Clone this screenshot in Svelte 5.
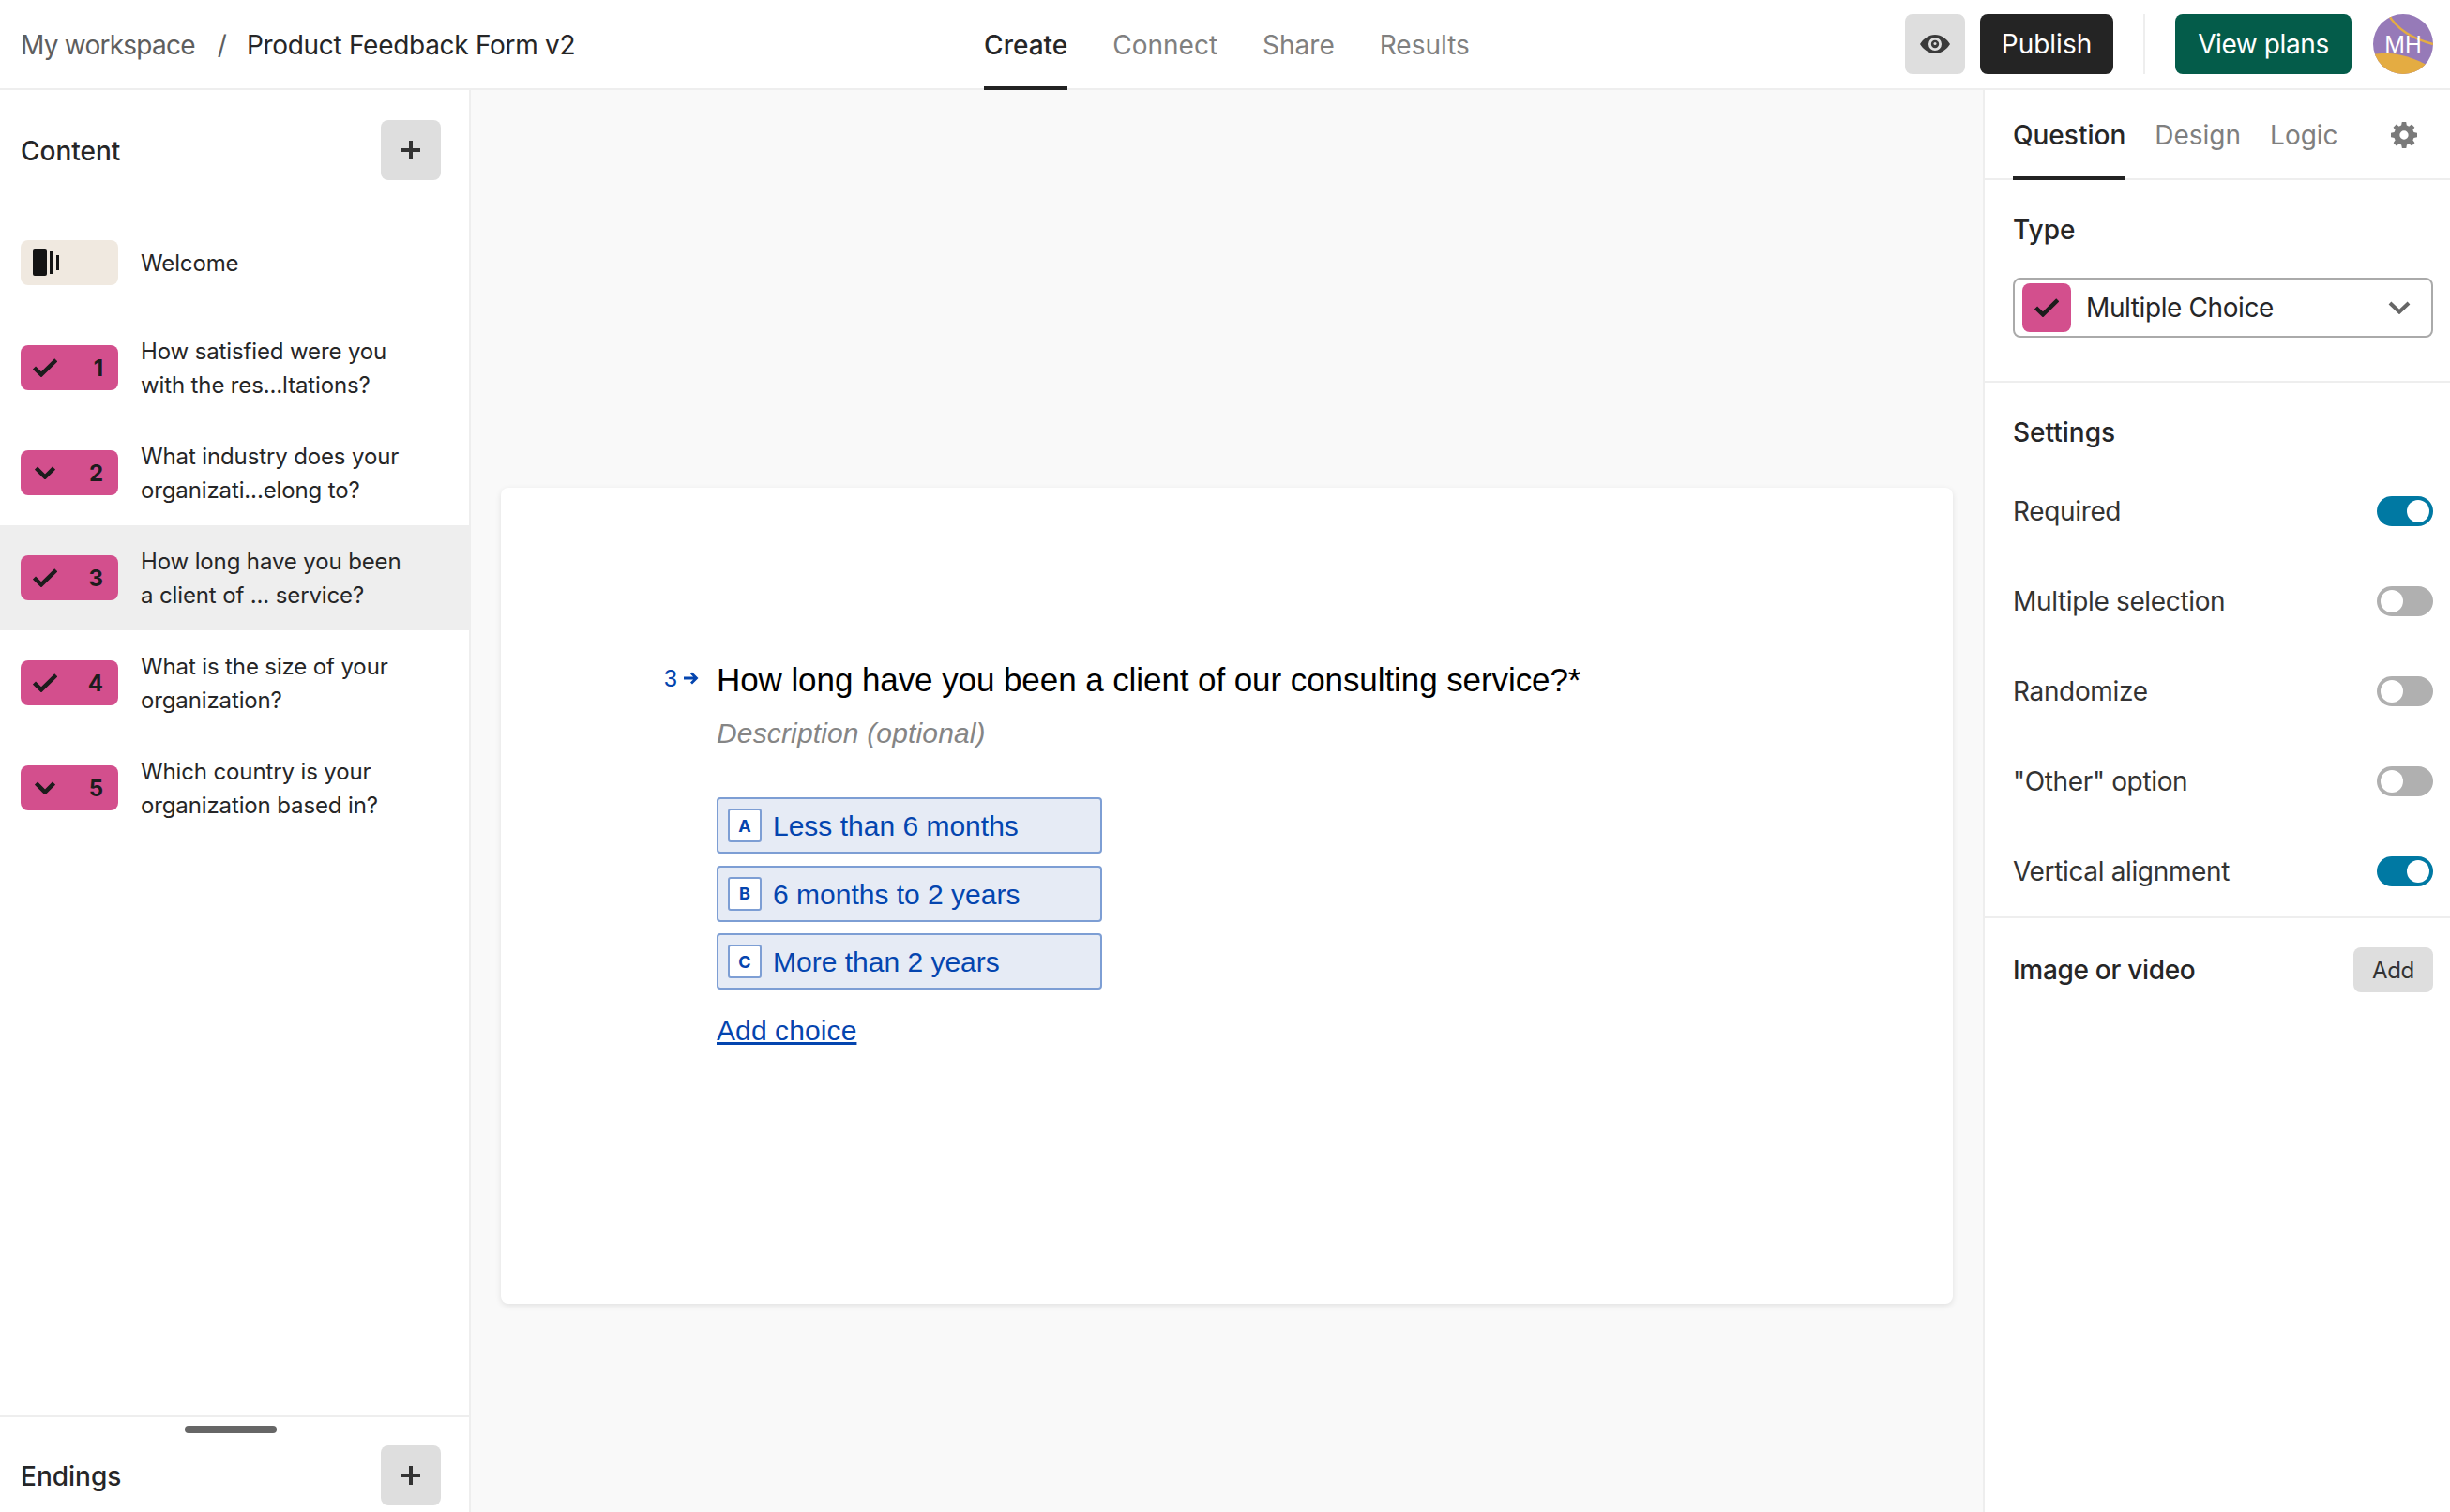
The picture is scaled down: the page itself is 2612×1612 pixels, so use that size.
<script>
  const questions = [
    { n: 1, icon: "check", lines: ["How satisfied were you", "with the res...ltations?"] },
    { n: 2, icon: "chevron", lines: ["What industry does your", "organizati...elong to?"] },
    { n: 3, icon: "check", lines: ["How long have you been", "a client of ... service?"], active: true },
    { n: 4, icon: "check", lines: ["What is the size of your", "organization?"] },
    { n: 5, icon: "chevron", lines: ["Which country is your", "organization based in?"] },
  ];
  const choices = [
    { key: "A", label: "Less than 6 months" },
    { key: "B", label: "6 months to 2 years" },
    { key: "C", label: "More than 2 years" },
  ];
  const settings = [
    { label: "Required", on: true },
    { label: "Multiple selection", on: false },
    { label: "Randomize", on: false },
    { label: '"Other" option', on: false },
    { label: "Vertical alignment", on: true },
  ];
</script>

{#snippet plus()}
  <button class="add-btn" aria-label="Add">
    <svg width="20" height="20" viewBox="0 0 20 20"><path d="M10 0v20M0 10h20" stroke="#333" stroke-width="4" fill="none" /></svg>
  </button>
{/snippet}

{#snippet check()}
  <svg width="26" height="20" viewBox="0 0 26 20"><path d="M1.500 10l7.500 7.300L24.800 1.800" stroke="#1c1c1c" stroke-width="4.500" fill="none" /></svg>
{/snippet}

<div class="page">
  <header class="topbar">
    <div class="crumbs">
      <span class="muted">My workspace</span>
      <span class="slash">/</span>
      <span class="form-name">Product Feedback Form v2</span>
    </div>
    <nav class="nav">
      <span class="nav-item current">Create</span>
      <span class="nav-item">Connect</span>
      <span class="nav-item">Share</span>
      <span class="nav-item">Results</span>
    </nav>
    <div class="actions">
      <button class="eye" aria-label="Preview">
        <svg width="32" height="20" viewBox="0 0 32 20">
          <path fill-rule="evenodd" fill="#3a3a3a" d="M16 0C9 0 3.500 4.500 0 10c3.500 5.500 9 10 16 10s12.500-4.500 16-10C28.500 4.500 23 0 16 0zm0 3a7 7 0 1 1 0 14 7 7 0 0 1 0-14z" />
          <circle cx="16" cy="10" r="4.200" fill="#3a3a3a" />
          <circle cx="16" cy="9.500" r="1.500" fill="#dedede" />
        </svg>
      </button>
      <button class="publish">Publish</button>
      <span class="vr"></span>
      <button class="plans">View plans</button>
      <div class="avatar">
        <svg width="64" height="64" viewBox="0 0 64 64">
          <rect width="64" height="64" fill="#967ab8" />
          <path d="M0 43c14-3 36-2 64 15v6H0z" fill="#e4ac42" />
          <path d="M16 0c8 14 24 26 48 32" stroke="#e4ac42" stroke-width="2.500" fill="none" />
        </svg>
        <span>MH</span>
      </div>
    </div>
  </header>

  <div class="body">
    <aside class="left">
      <div class="section-head">
        <span class="head-label">Content</span>
        {@render plus()}
      </div>
      <div class="rows">
        <div class="row">
          <div class="chip welcome">
            <svg width="28" height="28" viewBox="0 0 28 28" fill="#141414">
              <rect x="0" y="0" width="15" height="28" rx="2" />
              <rect x="18" y="2" width="4" height="24" />
              <rect x="25" y="6" width="3" height="16" />
            </svg>
          </div>
          <div class="row-text">Welcome</div>
        </div>
        {#each questions as q}
          <div class="row" class:active={q.active}>
            <div class="chip">
              {#if q.icon === "check"}
                {@render check()}
              {:else}
                <svg class="chev" width="22" height="14" viewBox="0 0 22 14"><path d="M1.500 2l9.500 9.500L20.500 2" stroke="#1c1c1c" stroke-width="4.500" fill="none" /></svg>
              {/if}
              <span class="num">{q.n}</span>
            </div>
            <div class="row-text">
              {#each q.lines as line}<div>{line}</div>{/each}
            </div>
          </div>
        {/each}
      </div>
      <div class="endings">
        <span class="handle"></span>
        <div class="endings-head">
          <span class="head-label">Endings</span>
          {@render plus()}
        </div>
      </div>
    </aside>

    <main class="canvas">
      <section class="card">
        <div class="question">
          <div class="q-index">
            <span>3</span>
            <svg width="16" height="14" viewBox="0 0 16 14"><path d="M0 7h13M8 1.500L13.500 7 8 12.500" stroke="#0445af" stroke-width="2.800" fill="none" /></svg>
          </div>
          <div class="q-main">
            <h1 class="q-title">How long have you been a client of our consulting service?*</h1>
            <p class="q-desc">Description (optional)</p>
            <div class="choices">
              {#each choices as c}
                <div class="choice">
                  <span class="key">{c.key}</span>
                  <span class="choice-label">{c.label}</span>
                </div>
              {/each}
            </div>
            <a class="add-choice" href="#add">Add choice</a>
          </div>
        </div>
      </section>
    </main>

    <aside class="right">
      <div class="tabs">
        <span class="tab current">Question</span>
        <span class="tab">Design</span>
        <span class="tab">Logic</span>
        <svg class="gear" width="28" height="28" viewBox="0 0 24 24">
          <path fill="#7a7a7a" fill-rule="evenodd" d="M13.900 0l.5 3.100c.7.200 1.400.5 2 .9l2.600-1.800 2.700 2.700L20 7.500c.4.600.7 1.300.9 2l3.100.6v3.800l-3.100.6c-.2.700-.5 1.400-.9 2l1.800 2.600-2.700 2.700-2.600-1.800c-.6.400-1.300.7-2 .9l-.5 3.100h-3.800l-.6-3.100c-.7-.2-1.400-.5-2-.9l-2.600 1.800-2.700-2.700L4 16.500c-.4-.6-.7-1.300-.9-2L0 13.900v-3.800l3.100-.6c.2-.7.5-1.400.9-2L2.200 4.900l2.700-2.700L7.500 4c.6-.4 1.300-.7 2-.9l.6-3.100h3.800zM12 8a4 4 0 1 0 0 8 4 4 0 0 0 0-8z" />
        </svg>
      </div>
      <div class="type-block">
        <div class="block-label">Type</div>
        <div class="select">
          <span class="select-chip">
            {@render check()}
          </span>
          <span class="select-text">Multiple Choice</span>
          <svg width="24" height="14" viewBox="0 0 24 14"><path d="M2 2l10 9.500L22 2" stroke="#666" stroke-width="4" fill="none" /></svg>
        </div>
      </div>
      <div class="settings">
        <div class="block-label">Settings</div>
        {#each settings as s}
          <div class="setting">
            <span>{s.label}</span>
            <span class="toggle" class:on={s.on}><span class="knob"></span></span>
          </div>
        {/each}
      </div>
      <div class="media">
        <span class="block-label media-label">Image or video</span>
        <button class="small-add">Add</button>
      </div>
    </aside>
  </div>
</div>

<style>
  :global(body) {
    margin: 0;
    font-family: Inter, "Liberation Sans", sans-serif;
    color: #262627;
    background: #fff;
  }
  button { font-family: inherit; border: none; cursor: pointer; padding: 0; }

  .page { width: 2612px; height: 1612px; display: flex; flex-direction: column; overflow: hidden; }

  .topbar {
    height: 96px;
    box-sizing: border-box;
    flex-shrink: 0;
    border-bottom: 2px solid #eee;
    display: grid;
    grid-template-columns: 1fr auto 1fr;
    align-items: stretch;
    font-size: 28px;
    padding: 0 18px 0 22px;
  }
  .crumbs { display: flex; align-items: center; gap: 24px; }
  .muted { color: #5e5e5e; letter-spacing: -0.75px; }
  .slash { color: #5e5e5e; }
  .form-name { letter-spacing: -0.3px; margin-left: -3px; }
  .nav { display: flex; gap: 48px; }
  .nav-item {
    display: flex;
    align-items: center;
    color: #808080;
    height: 96px;
    box-sizing: border-box;
    border-top: 4px solid transparent;
    border-bottom: 4px solid transparent;
  }
  .nav-item.current { color: #262627; font-weight: 500; border-bottom-color: #222; }
  .actions { display: flex; align-items: center; justify-content: flex-end; padding-bottom: 2px; }
  .eye {
    width: 64px; height: 64px; background: #dedede; border-radius: 8px;
    display: flex; align-items: center; justify-content: center;
  }
  .publish {
    margin-left: 16px; height: 64px; width: 142px; border-radius: 8px;
    background: #242424; color: #fff; font-size: 28px;
  }
  .vr { width: 2px; height: 64px; background: #eee; margin: 0 32px; }
  .plans {
    height: 64px; width: 188px; border-radius: 8px;
    background: #045c4a; color: #fff; font-size: 28px; letter-spacing: -0.4px;
  }
  .avatar {
    margin-left: 23px; width: 64px; height: 64px; border-radius: 50%;
    overflow: hidden; position: relative; color: #fff; font-size: 24px;
  }
  .avatar svg { display: block; }
  .avatar span { position: absolute; inset: 0; display: flex; align-items: center; justify-content: center; }

  .body { flex: 1; display: flex; min-height: 0; }

  .left {
    width: 502px; box-sizing: border-box; border-right: 2px solid #eee;
    display: flex; flex-direction: column; flex-shrink: 0;
  }
  .section-head {
    height: 128px; flex-shrink: 0; box-sizing: border-box;
    display: flex; align-items: center; justify-content: space-between;
    padding: 0 30px 0 22px;
  }
  .head-label { font-size: 28px; font-weight: 500; padding-top: 2px; }
  .add-btn {
    width: 64px; height: 64px; border-radius: 8px; background: #dedede;
    display: flex; align-items: center; justify-content: center;
  }
  .rows { flex: 1; }
  .row {
    height: 112px; box-sizing: border-box; padding-left: 22px;
    display: flex; align-items: center; gap: 24px;
  }
  .row.active { background: #eee; }
  .chip {
    width: 104px; height: 48px; border-radius: 8px; background: #d34f8d;
    display: flex; align-items: center; justify-content: space-between;
    box-sizing: border-box; padding: 0 16px 0 13px; flex-shrink: 0;
  }
  .chip .chev { margin-left: 2px; }
  .chip.welcome { background: #f0e9e0; justify-content: flex-start; }
  .num { font-size: 24px; font-weight: 700; color: #1c1c1c; }
  .row-text { font-size: 24px; line-height: 36px; color: #262627; letter-spacing: -0.13px; padding-top: 2px; }

  .endings { height: 103px; box-sizing: border-box; border-top: 2px solid #eee; flex-shrink: 0; position: relative; }
  .handle {
    position: absolute; left: 197px; top: 9px; width: 98px; height: 8px;
    background: #666; border-radius: 4px;
  }
  .endings-head {
    display: flex; align-items: center; justify-content: space-between;
    padding: 30px 30px 0 22px;
  }

  .canvas {
    flex: 1; min-width: 0; background: #f9f9f9;
    box-sizing: border-box; padding: 424px 32px 0;
  }
  .card {
    height: 870px; background: #fff; border-radius: 8px;
    box-shadow: 0 2px 6px rgba(0, 0, 0, 0.1);
    box-sizing: border-box; padding: 180px 0 0 174px;
    font-family: "Liberation Sans", Arial, sans-serif;
  }
  .question { display: flex; }
  .q-index {
    width: 56px; flex-shrink: 0; display: flex; align-items: center; gap: 7px;
    height: 46px; color: #0445af; font-size: 25px;
  }
  .q-title { margin: 0; font-size: 35px; line-height: 50px; font-weight: 400; color: #000; letter-spacing: -0.08px; }
  .q-desc { margin: 8px 0 0; font-size: 30px; line-height: 48px; font-style: italic; color: #858585; letter-spacing: 0.15px; }
  .choices { margin-top: 44px; display: flex; flex-direction: column; gap: 12.600px; width: 411px; }
  .choice {
    height: 60px; box-sizing: border-box; border-radius: 4px;
    border: 2px solid #7d9ed4; background: #e6ebf5; color: #0445af;
    font-size: 30px; display: flex; align-items: center; gap: 12px; padding-left: 10px;
  }
  .choice-label { padding-top: 2px; }
  .key {
    width: 36px; height: 36px; box-sizing: border-box; border: 2px solid #7d9ed4;
    border-radius: 3px; background: #fff; font-size: 18px; font-weight: 700;
    display: flex; align-items: center; justify-content: center;
    font-family: Inter, sans-serif;
  }
  .add-choice {
    display: inline-block; margin-top: 22px; font-size: 30px; line-height: 44px;
    color: #0445af; text-decoration: underline; letter-spacing: 0.1px;
  }

  .right {
    width: 498px; flex-shrink: 0; box-sizing: border-box; border-left: 2px solid #eee;
    display: flex; flex-direction: column;
  }
  .tabs {
    height: 96px; box-sizing: border-box; border-bottom: 2px solid #eee;
    display: flex; align-items: stretch; gap: 31px; padding-left: 30px; position: relative;
  }
  .tab {
    display: flex; align-items: center; font-size: 28px; color: #7f7f7f;
    border-bottom: 4px solid transparent; margin-bottom: -2px; padding-top: 4px;
  }
  .tab.current { color: #262627; font-weight: 500; border-bottom-color: #222; }
  .gear { position: absolute; right: 35px; top: 34px; }
  .type-block { height: 216px; box-sizing: border-box; border-bottom: 2px solid #eee; padding: 33px 18px 0 30px; }
  .block-label { font-size: 28px; font-weight: 500; line-height: 40px; }
  .select {
    margin-top: 31px; height: 64px; box-sizing: border-box; border: 2px solid #aaa;
    border-radius: 8px; display: flex; align-items: center; padding: 0 22px 0 8px; background: #fff;
  }
  .select-chip {
    width: 52px; height: 52px; border-radius: 8px; background: #d34f8d;
    display: flex; align-items: center; justify-content: center; flex-shrink: 0;
  }
  .select-text { flex: 1; font-size: 28px; margin-left: 16px; letter-spacing: -0.4px; }
  .settings { padding: 33px 18px 0 30px; height: 571px; box-sizing: border-box; border-bottom: 2px solid #eee; }
  .setting {
    height: 96px; display: flex; align-items: center; justify-content: space-between;
    font-size: 28px; color: #333; letter-spacing: -0.35px;
  }
  .settings .block-label { margin-bottom: 16px; }
  .toggle {
    width: 60px; height: 32px; border-radius: 16px; background: #b0b0b0;
    box-sizing: border-box; padding: 4px; display: flex; justify-content: flex-start;
  }
  .toggle.on { background: #0079a3; justify-content: flex-end; }
  .knob { width: 24px; height: 24px; border-radius: 12px; background: #fff; }
  .media {
    display: flex; align-items: center; justify-content: space-between;
    padding: 31px 18px 0 30px;
  }
  .media-label { letter-spacing: -0.3px; }
  .small-add {
    width: 85px; height: 48px; border-radius: 8px; background: #dedede;
    font-size: 24px; color: #333; letter-spacing: -0.3px;
  }
</style>
